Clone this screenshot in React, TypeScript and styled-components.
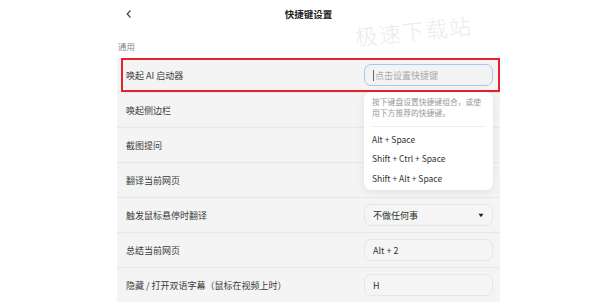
import React from 'react'
import styled, { createGlobalStyle } from 'styled-components'

const GlobalStyle = createGlobalStyle`
  html, body {
    margin: 0;
    padding: 0;
    background: #ffffff;
  }
  body {
    font-family: 'Noto Sans CJK SC', 'Noto Sans', sans-serif;
    color: #333;
    overflow: hidden;
  }
`

const Page = styled.div`
  position: relative;
  width: 600px;
  height: 302px;
  overflow: hidden;
`

const Column = styled.div`
  position: relative;
  margin-left: 117px;
  width: 383px;
`

const Header = styled.header`
  display: grid;
  grid-template-columns: 24px 1fr 24px;
  align-items: center;
  height: 28px;
`

const BackButton = styled.button`
  display: flex;
  align-items: center;
  justify-content: center;
  width: 24px;
  height: 24px;
  padding: 0;
  border: none;
  background: transparent;
  color: #444;
`

const Title = styled.h1`
  margin: 0;
  text-align: center;
  font-size: 9.5px;
  font-weight: 700;
  color: #222;
`

const SectionLabel = styled.div`
  padding: 12px 0 5px 1px;
  font-size: 8.5px;
  line-height: 13px;
  color: #888;
`

const Card = styled.div`
  position: relative;
  background: #f4f4f4;
`

const Row = styled.div`
  display: flex;
  align-items: center;
  justify-content: space-between;
  height: 34px;
  padding: 0 7px 0 9px;
  border-bottom: 1px solid #e8e8e8;
`

const Label = styled.span`
  font-size: 9px;
  color: #3a3a3a;
`

const Field = styled.div<{ $focused?: boolean }>`
  display: flex;
  align-items: center;
  justify-content: space-between;
  box-sizing: border-box;
  width: 129px;
  height: 22px;
  padding: 0 8px;
  border-radius: 7px;
  border: 1px solid ${p => (p.$focused ? '#a9c7f5' : '#e6e6e6')};
  background: ${p => (p.$focused ? '#f3f3f3' : '#f5f5f5')};
  font-size: 9px;
  color: ${p => (p.$focused ? '#aaa' : '#333')};
`

const Caret = styled.span`
  width: 1px;
  height: 11px;
  margin-right: 1px;
  background: #666;
`

const FieldText = styled.span`
  flex: 1;
`

const Highlight = styled.div`
  position: absolute;
  left: 4px;
  top: 0;
  right: 0;
  height: 34px;
  border: 2px solid #e3222b;
  box-sizing: border-box;
  pointer-events: none;
`

const Popover = styled.div`
  position: absolute;
  left: 247px;
  top: 34px;
  width: 129px;
  box-sizing: border-box;
  padding: 4px 0 2px;
  background: #fff;
  border-radius: 7px;
  box-shadow: 0 2px 8px rgba(0, 0, 0, 0.08);
`

const Hint = styled.p`
  margin: 0 8px;
  padding-bottom: 8px;
  border-bottom: 1px solid #ececec;
  font-size: 7.8px;
  line-height: 11px;
  color: #999;
`

const Option = styled.div`
  padding: 0 8px;
  height: 19.5px;
  display: flex;
  align-items: center;
  font-size: 8.5px;
  color: #333;
  &:first-of-type {
    margin-top: 2px;
  }
`

const Watermark = styled.div`
  position: absolute;
  left: 357px;
  top: 20px;
  font-size: 22px;
  font-weight: 300;
  letter-spacing: 1.5px;
  color: #ebebeb;
  transform: rotate(-6deg);
  transform-origin: left bottom;
  pointer-events: none;
`

const ChevronLeft = () => (
  <svg width="8" height="10" viewBox="0 0 8 10">
    <path d="M5.5 1.5 L2.2 5 L5.5 8.5" fill="none" stroke="#444" strokeWidth="1.2" />
  </svg>
)

const TriangleDown = () => (
  <svg width="6" height="5" viewBox="0 0 6 5">
    <path d="M0.5 0.8 H5.5 L3 4.2 Z" fill="#222" />
  </svg>
)

const rows: { label: string; value?: string; select?: boolean }[] = [
  { label: '唤起侧边栏' },
  { label: '截图提问' },
  { label: '翻译当前网页' },
  { label: '触发鼠标悬停时翻译', value: '不做任何事', select: true },
  { label: '总结当前网页', value: 'Alt + 2' },
  { label: '隐藏 / 打开双语字幕（鼠标在视频上时）', value: 'H' },
]

const options = ['Alt + Space', 'Shift + Ctrl + Space', 'Shift + Alt + Space']

const App = () => {
  return (
    <Page>
      <GlobalStyle />
      <Column>
        <Header>
          <BackButton>
            <ChevronLeft />
          </BackButton>
          <Title>快捷键设置</Title>
          <span />
        </Header>
        <SectionLabel>通用</SectionLabel>
        <Card>
          <Row>
            <Label>唤起 AI 启动器</Label>
            <Field $focused>
              <Caret />
              <FieldText>点击设置快捷键</FieldText>
            </Field>
          </Row>
          {rows.map(r => (
            <Row key={r.label}>
              <Label>{r.label}</Label>
              {r.value && (
                <Field>
                  <FieldText>{r.value}</FieldText>
                  {r.select && <TriangleDown />}
                </Field>
              )}
            </Row>
          ))}
          <Highlight />
          <Popover>
            <Hint>按下键盘设置快捷键组合，或使用下方推荐的快捷键。</Hint>
            {options.map(o => (
              <Option key={o}>{o}</Option>
            ))}
          </Popover>
        </Card>
      </Column>
      <Watermark>极速下载站</Watermark>
    </Page>
  )
}

export default App
